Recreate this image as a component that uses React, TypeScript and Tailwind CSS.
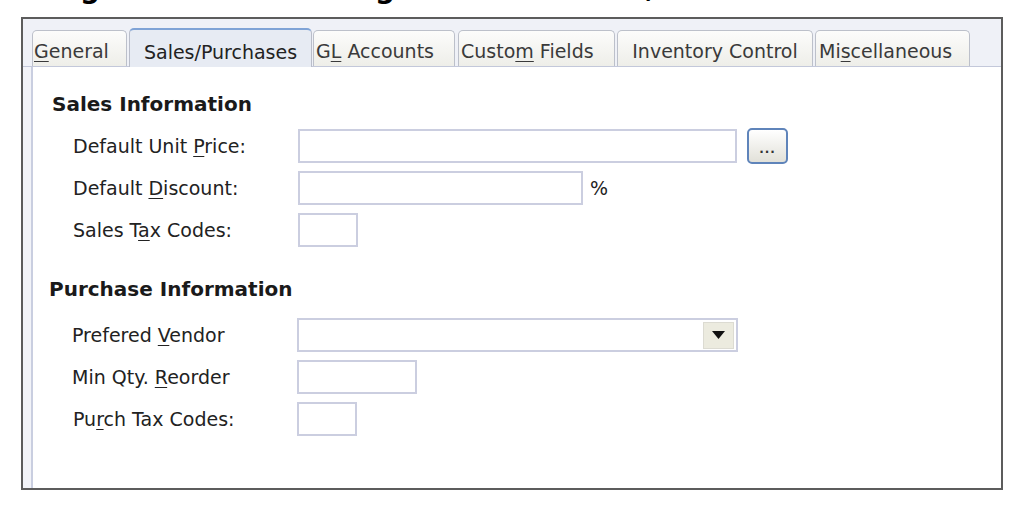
import React from "react";

const U = ({ children }: { children: React.ReactNode }) => (
  <span className="underline decoration-1 underline-offset-[3px]">{children}</span>
);

type Tab = { label: React.ReactNode; cls: string; active?: boolean };

const tabs: Tab[] = [
  { label: <><U>G</U>eneral</>, cls: "w-[95px] pl-[1px]" },
  { label: <>Sales/Purchases</>, cls: "w-[183px] ml-[2px] justify-center", active: true },
  { label: <>G<U>L</U>{" "}Accounts</>, cls: "w-[142px] ml-[1px] pl-[2px]" },
  { label: <>Custo<U>m</U>{" "}Fields</>, cls: "w-[157px] ml-[3px] pl-[2px]" },
  { label: <>Inventory Control</>, cls: "w-[196px] ml-[2px] justify-center" },
  { label: <>Mi<U>s</U>cellaneous</>, cls: "w-[155px] ml-[2px] pl-[3px]" },
];

const Input = ({ cls }: { cls: string }) => (
  <div className={"h-[34px] border-2 border-[#cbcee0] bg-white " + cls} />
);

const Label = ({ children }: { children: React.ReactNode }) => (
  <div className="w-[225px] shrink-0 text-[19px] leading-[34px] text-[#222] whitespace-pre">{children}</div>
);

export default function App() {
  return (
    <div className="w-[1024px] h-[509px] bg-white overflow-hidden font-['DejaVu_Sans',sans-serif] text-[#222]">
      {/* cut-off caption descenders */}
      <div className="h-[17px]">
        <div className="flex h-[6px] overflow-hidden font-bold text-[28px] leading-none text-black">
          <span className="ml-[80px] -mt-[25px]">g</span>
          <span className="ml-[275px] -mt-[25px]">g</span>
          <span className="ml-[250px] -mt-[26px]">,</span>
        </div>
      </div>

      {/* frame */}
      <div className="ml-[21px] w-[982px] h-[473px] border-2 border-[#5c5c5c] flex flex-col">
        {/* tab strip */}
        <div className="h-[48px] shrink-0 bg-[#eff1f7] flex items-end pl-[9px] border-b border-[#c3c8da]">
          {tabs.map((t, i) =>
            t.active ? (
              <div
                key={i}
                className={
                  "h-[39px] -mb-px flex items-start pt-[11px] rounded-t-[5px] border-x border-[#b9bdc9] border-t-2 border-t-[#7fa3d6] bg-[#e7ebf3] text-[19px] leading-[22px] text-[#222] whitespace-nowrap overflow-hidden " +
                  t.cls
                }
              >
                <span className="whitespace-pre">{t.label}</span>
              </div>
            ) : (
              <div
                key={i}
                className={
                  "h-[36px] flex items-start pt-[9px] rounded-t-[5px] border border-b-0 border-[#bcc0ca] bg-gradient-to-b from-[#fcfcfb] to-[#eeeee9] text-[19px] leading-[22px] text-[#3a3a3a] whitespace-nowrap overflow-hidden " +
                  t.cls
                }
              >
                <span className="whitespace-pre">{t.label}</span>
              </div>
            )
          )}
        </div>

        {/* page */}
        <div className="flex-1 flex">
          <div className="w-[8px] bg-[#f2f3f8]" />
          <div className="flex-1 bg-white border-l-2 border-[#c9cee0] pt-[25px]">
            <div className="pl-[19px] text-[20px] leading-[24px] font-bold text-[#1a1a1a]">Sales Information</div>

            <div className="mt-[13px] pl-[40px] flex flex-col gap-[8px]">
              <div className="flex items-center h-[34px]">
                <Label>
                  Default Unit <U>P</U>rice:
                </Label>
                <Input cls="w-[439px]" />
                <div className="ml-[10px] w-[41px] h-[36px] rounded-[5px] border-2 border-[#5f84ba] bg-gradient-to-b from-white to-[#e2e1d9] flex items-end justify-center pb-[7px] text-[12px] font-bold leading-none tracking-[1px] text-[#333]">
                  ...
                </div>
              </div>
              <div className="flex items-center h-[34px]">
                <Label>
                  Default <U>D</U>iscount:
                </Label>
                <Input cls="w-[285px]" />
                <span className="ml-[7px] text-[19px] leading-[34px]">%</span>
              </div>
              <div className="flex items-center h-[34px]">
                <Label>
                  Sales T<U>a</U>x Codes:
                </Label>
                <Input cls="w-[60px]" />
              </div>
            </div>

            <div className="mt-[30px] pl-[16px] text-[20px] leading-[24px] font-bold text-[#1a1a1a]">Purchase Information</div>

            <div className="mt-[17px] pl-[39px] flex flex-col gap-[8px]">
              <div className="flex items-center h-[34px]">
                <Label>
                  Prefered <U>V</U>endor
                </Label>
                <div className="w-[441px] h-[34px] border-2 border-[#cbcee0] bg-white flex items-center justify-end pr-[2px]">
                  <div className="w-[31px] h-[27px] bg-[#ecebdf] border border-[#dcdbd2] flex items-center justify-center">
                    <svg width="13" height="8" viewBox="0 0 13 8">
                      <polygon points="0,0 13,0 6.5,8" fill="#111" />
                    </svg>
                  </div>
                </div>
              </div>
              <div className="flex items-center h-[34px]">
                <Label>
                  Min Qty. <U>R</U>eorder
                </Label>
                <Input cls="w-[120px]" />
              </div>
              <div className="flex items-center h-[34px]">
                <Label>
                  <span className="ml-[1px]">
                    Pu<U>r</U>ch Tax Codes:
                  </span>
                </Label>
                <Input cls="w-[60px]" />
              </div>
            </div>
          </div>
        </div>
      </div>
    </div>
  );
}
